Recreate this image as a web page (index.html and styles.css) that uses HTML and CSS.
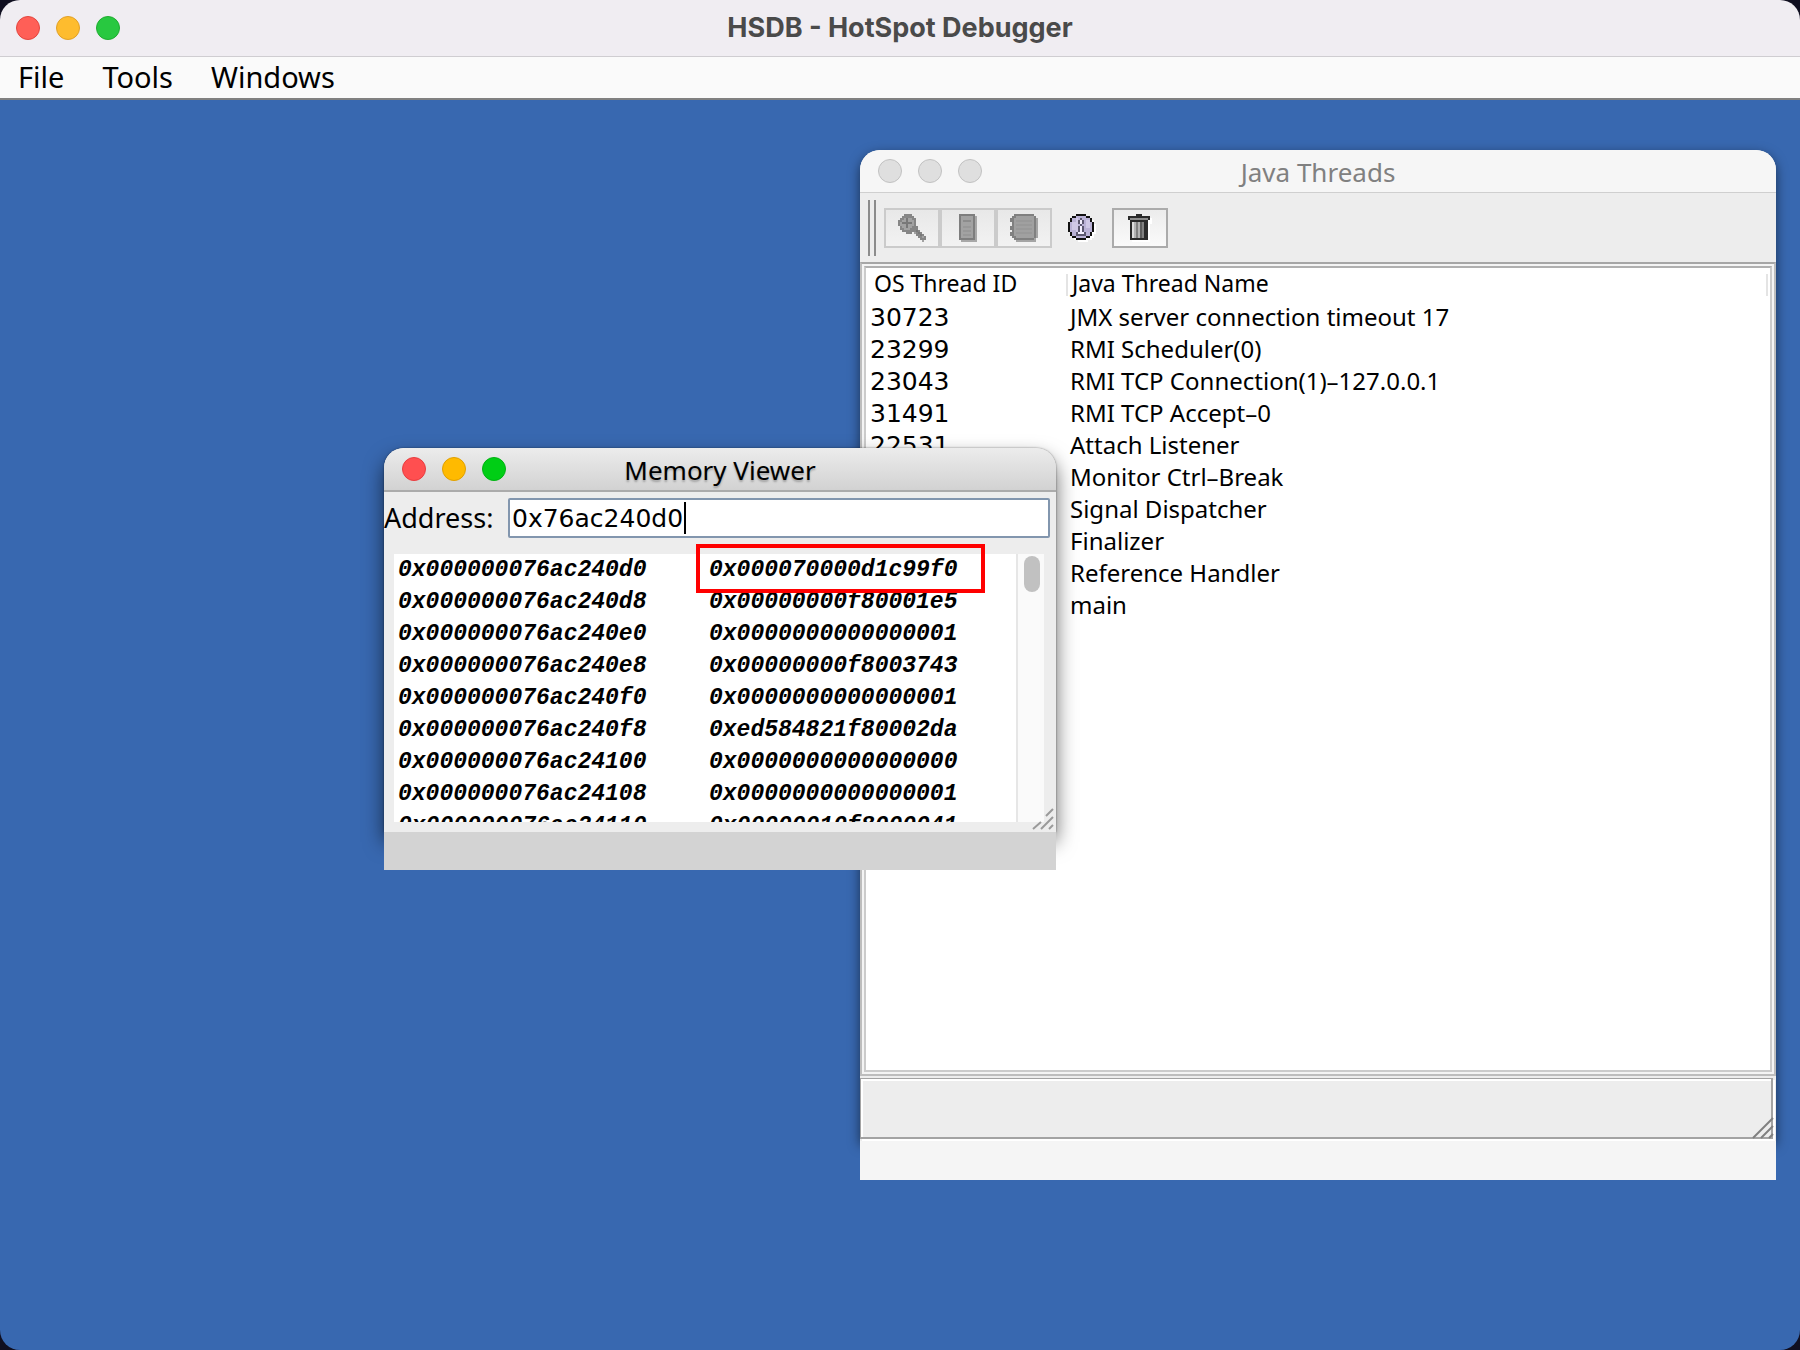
FILE: index.html
```html
<!DOCTYPE html>
<html lang="en">
<head>
<meta charset="utf-8">
<title>HSDB - HotSpot Debugger</title>
<link rel="stylesheet" href="styles.css">
</head>
<body>
<div class="app">
  <header class="app-title">
    <div class="lights"><button class="light close" aria-label="Close"></button><button class="light minimize" aria-label="Minimize"></button><button class="light zoom" aria-label="Zoom"></button></div>
    <h1>HSDB - HotSpot Debugger</h1>
  </header>
  <nav class="menubar">
    <button>File</button><button>Tools</button><button>Windows</button>
  </nav>
  <main class="desktop">
    <section class="window threads" aria-labelledby="threads-title">
      <div class="frame">
        <header class="titlebar">
          <div class="lights"><button class="light" aria-label="Close"></button><button class="light" aria-label="Minimize"></button><button class="light" aria-label="Zoom"></button></div>
          <h2 id="threads-title">Java Threads</h2>
        </header>
        <div class="toolbar">
          <span class="handle"></span>
          <div class="tools">
            <button class="tool" disabled aria-label="Inspect thread">
              <svg width="28" height="28" viewBox="0 0 14 14" shape-rendering="crispEdges"><path fill="#868686" d="M3 0h4v1h1v1h1v4h1v2h1v1h1v1h1v1h1v2h-1v1h-1v-1h-1v-1h-1v-1H9v-1H8V9H7v1H4V9H2V8H1V6H0V3h1V2h1V1h1z"/><path fill="#a2a2a2" d="M3 2h4v1h1v3H7v1H6v1H3V7H2V6H1V4h1V3h1zM8 9h1v1H8zM12 11h1v1h-1zM12 13h1v1h-1z"/><path fill="#787878" d="M4 2h1v2h2v1H5v2H4V5H2V4h2zM9 8h1v1h1v1h1v1h-1v-1h-1V9H9z"/></svg>
            </button>
            <button class="tool" disabled aria-label="Stack memory">
              <svg width="18" height="28" viewBox="0 0 9 14" shape-rendering="crispEdges"><path fill="#a8a8a8" d="M1 1h8v13H1z"/><path fill="#7e7e7e" d="M0 0h8v13H0z"/><path fill="#a2a2a2" d="M1 1h6v11H1z"/><path fill="#8c8c8c" d="M2 3h4v1H2z"/><path fill="#989898" d="M2 6h4v1H2zM2 8h4v1H2zM2 10h4v1H2z"/></svg>
            </button>
            <button class="tool" disabled aria-label="Stack trace">
              <svg width="28" height="28" viewBox="0 0 14 14" shape-rendering="crispEdges"><path fill="#a4a4a4" d="M3 1h10v1h1v10h-1v2H3z"/><path fill="#808080" d="M2 0h10v1h1v11h-1v1H2v-1H1v-1H0V9h1V8H0V6h1V4H0V2h1V1h1z"/><path fill="#a0a0a0" d="M3 1h9v11H3v-1H2V2h1z"/><path fill="#999" d="M3 3h8v1H3zM3 5h8v1H3zM3 7h8v1H3zM3 9h8v1H3z"/></svg>
            </button>
            <button class="tool flat" aria-label="Thread information">
              <svg width="28" height="28" viewBox="0 0 14 14" shape-rendering="crispEdges"><path fill="#fff" d="M5 1h5v1h2v1h1v2h1v5h-1v2h-1v1h-2v1H5v-1H3v-1H2z"/><path fill="#111" d="M4 0h5v1h2v1h1v2h1v5h-1v2h-1v1H9v1H4v-1H2v-1H1V9H0V4h1V2h1V1h2z"/><path fill="#bab2d6" d="M4 1h5v1h2v2h1v5h-1v2H9v1H4v-1H2V9H1V4h1V2h2z"/><path fill="#cfc8e6" d="M4 2h1v8H4zM2 4h2v4H2zM9 3h2v4H9z"/><path fill="#5c5870" d="M6 2h1v1h1v2H7v1h1v3h1v2H4V9h1V6h1V5H5V3h1z"/><path fill="#f4f0ff" d="M6 3h1v2H6zM6 6h1v3h1v1H5V9h1z"/></svg>
            </button>
            <button class="tool" aria-label="Find garbage">
              <svg width="24" height="28" viewBox="0 0 12 14" shape-rendering="crispEdges"><path fill="#fff" d="M1 2h11v3h-1v9H2z"/><path fill="#2a2a2a" d="M4 0h3v1h4v2h-1v10H1V3H0V1h4z"/><path fill="#8c8c8c" d="M1 2h9v1H1z"/><path fill="#ddd" d="M2 4h1v8H2z"/><path fill="#b4b4b4" d="M3 4h1v8H3zM5 4h1v8H5z"/><path fill="#808080" d="M4 4h1v8H4zM7 4h1v8H7z"/><path fill="#5c5c5c" d="M6 4h1v8H6z"/></svg>
            </button>
          </div>
        </div>
        <div class="outer-border"><div class="inner-border">
          <table class="thread-table">
            <thead><tr><th>OS Thread ID</th><th>Java Thread Name</th></tr></thead>
            <tbody>
              <tr><td>30723</td><td>JMX server connection timeout 17</td></tr>
              <tr><td>23299</td><td>RMI Scheduler(0)</td></tr>
              <tr><td>23043</td><td>RMI TCP Connection(1)–127.0.0.1</td></tr>
              <tr><td>31491</td><td>RMI TCP Accept–0</td></tr>
              <tr><td>22531</td><td>Attach Listener</td></tr>
              <tr><td></td><td>Monitor Ctrl–Break</td></tr>
              <tr><td></td><td>Signal Dispatcher</td></tr>
              <tr><td></td><td>Finalizer</td></tr>
              <tr><td></td><td>Reference Handler</td></tr>
              <tr><td></td><td>main</td></tr>
            </tbody>
          </table>
        </div></div>
        <div class="status"></div>
        <svg class="grip" width="22" height="22" viewBox="0 0 22 22"><path d="M1 21L21 1M9 21L21 9M17 21L21 17" stroke="#808080" stroke-width="2"/></svg>
      </div>
      <div class="strip"></div>
    </section>

    <section class="window memory" aria-labelledby="memory-title">
      <div class="frame">
        <header class="titlebar">
          <div class="lights"><button class="light close" aria-label="Close"></button><button class="light minimize" aria-label="Minimize"></button><button class="light zoom" aria-label="Zoom"></button></div>
          <h2 id="memory-title">Memory Viewer</h2>
        </header>
        <div class="address">
          <label for="address">Address:</label>
          <div class="field"><input id="address" type="text" value="0x76ac240d0"><span class="caret"></span></div>
        </div>
        <div class="dump">
          <div class="dump-view">
            <table class="dump-table">
              <tr><td>0x000000076ac240d0</td><td>0x000070000d1c99f0</td></tr>
              <tr><td>0x000000076ac240d8</td><td>0x00000000f80001e5</td></tr>
              <tr><td>0x000000076ac240e0</td><td>0x0000000000000001</td></tr>
              <tr><td>0x000000076ac240e8</td><td>0x00000000f8003743</td></tr>
              <tr><td>0x000000076ac240f0</td><td>0x0000000000000001</td></tr>
              <tr><td>0x000000076ac240f8</td><td>0xed584821f80002da</td></tr>
              <tr><td>0x000000076ac24100</td><td>0x0000000000000000</td></tr>
              <tr><td>0x000000076ac24108</td><td>0x0000000000000001</td></tr>
              <tr><td>0x000000076ac24110</td><td>0x00000010f8000041</td></tr>
            </table>
          </div>
          <div class="track"><div class="thumb"></div></div>
          <div class="mark"></div>
        </div>
        <svg class="grip" width="22" height="22" viewBox="0 0 22 22"><path d="M1 21L9 14M9 21L21 9M17 21L21 17M14 8L21 1" stroke="#9a9a9a" stroke-width="2"/></svg>
      </div>
      <div class="strip"></div>
    </section>
  </main>
</div>
</body>
</html>
```
FILE: styles.css
```css
* { box-sizing: border-box; }

body {
  margin: 0;
  background: #100f20;
  color: #000;
  font-family: "Noto Sans", "Open Sans", sans-serif;
}

button, input { font: inherit; color: inherit; }
button { border: 0; padding: 0; background: none; }
h1, h2 { margin: 0; }

.app {
  display: flex;
  flex-direction: column;
  min-height: 100vh;
  border-radius: 20px;
  overflow: hidden;
}

.app-title {
  display: grid;
  align-items: center;
  height: 57px;
  padding: 0 16px;
  background: #f0edf2;
  border-bottom: 1px solid #cfcdd1;
}
.app-title > *, .titlebar > * { grid-area: 1 / 1; }
.app-title h1 {
  text-align: center;
  font: 700 27px/32px Inter, sans-serif;
  color: #4a4a4a;
}

.lights { display: flex; gap: 16px; }
.light {
  width: 24px;
  height: 24px;
  border-radius: 50%;
  background: #dfdfdf;
  border: 1px solid #c2c2c2;
}
.light.close { background: #ff5f57; border-color: #e2463f; }
.light.minimize { background: #febc2e; border-color: #e0a028; }
.light.zoom { background: #28c840; border-color: #1fac30; }

.menubar {
  display: flex;
  align-items: flex-start;
  gap: 38px;
  height: 43px;
  padding: 0 18px;
  background: #fafafa;
  border-bottom: 2px solid #808080;
  font-size: 29px;
  line-height: 40px;
}

.desktop {
  position: relative;
  flex: 1;
  background: #3868b0;
}

/* Internal windows float on the desktop */
.window { position: absolute; display: flex; flex-direction: column; }
.frame {
  position: relative;
  flex: 1;
  display: flex;
  flex-direction: column;
  min-height: 0;
  border-radius: 20px 20px 0 0;
  background: #ededed;
}
.titlebar {
  display: grid;
  align-items: center;
  padding: 0 18px;
  border-radius: 20px 20px 0 0;
}
.titlebar h2 {
  padding-top: 2px;
  text-align: center;
  font-size: 26px;
  line-height: 36px;
  font-weight: 400;
}
.strip { position: relative; flex: none; }
.grip { position: absolute; right: 2px; bottom: 2px; fill: none; }

.threads { left: 860px; right: 24px; top: 50px; height: 1030px; }
.threads .frame { box-shadow: 0 4px 12px rgba(0, 0, 0, .55); }
.threads .titlebar {
  height: 43px;
  background: #f6f6f6;
  border-bottom: 1px solid #cfcfcf;
  color: #808080;
}
.threads .strip { height: 39px; background: #f5f5f5; }

.toolbar {
  display: flex;
  align-items: center;
  gap: 8px;
  height: 69px;
  padding-left: 8px;
}
.handle {
  width: 8px;
  height: 56px;
  border: solid #8c8c8c;
  border-width: 0 2px;
}
.tools { display: flex; }
.tool {
  display: flex;
  align-items: center;
  justify-content: center;
  width: 56px;
  height: 40px;
  border: 2px solid #ababab;
  background: linear-gradient(#ececec, #fafafa);
}
.tool:disabled { border-color: #cbcbcb; background: linear-gradient(#e8e8e8, #f2f2f2); }
.tool.flat { width: 60px; border-color: transparent; background: none; }

.outer-border {
  flex: 1;
  display: flex;
  padding: 2px;
  border: 2px solid #bdbdbd;
  border-top-color: #a6a6a6;
  background: #f4f4f4;
}
.inner-border {
  flex: 1;
  border: 2px solid #cbcbcb;
  border-top-color: #b0b0b0;
  background: #fff;
}
.thread-table {
  width: 100%;
  border-collapse: collapse;
  table-layout: fixed;
  font-size: 24px;
  line-height: 31px;
  text-align: left;
}
.thread-table td { height: 32px; padding: 0 4px; vertical-align: baseline; }
.thread-table th {
  height: 33px;
  padding: 0 6px;
  vertical-align: top;
  font-size: 23px;
  line-height: 30px;
  font-weight: 400;
}
.thread-table th:first-child { width: 200px; padding-left: 8px; }
.thread-table th + th {
  background:
    linear-gradient(#e4e4e4, #e4e4e4) left top 6px / 2px 22px no-repeat,
    linear-gradient(#e4e4e4, #e4e4e4) right 2px top 6px / 2px 22px no-repeat;
}
.thread-table td:first-child { font-family: "DejaVu Sans", sans-serif; font-size: 25px; }

.status {
  height: 61px;
  margin: 2px 3px 2px 0;
  border: 1px solid #a3a3a3;
  border-width: 1px 2px 2px 1px;
  box-shadow: inset 2px 2px #fff, 2px 2px #fff;
}

.memory { left: 384px; top: 348px; width: 672px; height: 422px; }
.memory .frame { box-shadow: 0 10px 20px rgba(0, 0, 0, .6), 0 0 2px rgba(0, 0, 0, .5); }
.memory .titlebar {
  height: 44px;
  background: linear-gradient(#ececec, #d2d2d2);
  border-bottom: 2px solid #ababab;
}
.memory .close { background: #ff4f50; border-color: #e83c3f; }
.memory .minimize { background: #ffba00; border-color: #e0a000; }
.memory .zoom { background: #00ce15; border-color: #00b312; }
.memory h2 { text-shadow: 0 2px 2px rgba(0, 0, 0, .25); }
.memory .strip { height: 38px; background: #d3d3d3; }

.address {
  display: flex;
  align-items: center;
  justify-content: space-between;
  padding: 6px 6px 16px 0;
  font-size: 27px;
}
.address label { line-height: 40px; }
.field { position: relative; width: 542px; }
.field input {
  display: block;
  width: 100%;
  height: 40px;
  padding: 0 2px;
  border: 2px solid #8296ae;
  border-radius: 2px;
  background: #fff;
  font-family: "DejaVu Sans", sans-serif;
  font-size: 25px;
}
.caret {
  position: absolute;
  left: 176px;
  top: 4px;
  width: 2px;
  height: 32px;
  background: #000;
}

.dump {
  position: relative;
  flex: 1;
  display: flex;
  min-height: 0;
  margin: 0 12px 10px 10px;
  background: #fff;
}
.dump-view { flex: 1; overflow: hidden; }
.dump-table {
  border-collapse: collapse;
  font: italic 700 23px/32px "Liberation Mono", monospace;
}
.dump-table td { height: 32px; padding: 0 0 0 4px; width: 312px; }

/* Highlight round the first value */
.mark {
  position: absolute;
  left: 302px;
  top: -10px;
  width: 289px;
  height: 49px;
  border: 4px solid #f00;
}
.track {
  width: 28px;
  padding: 2px 4px 0 6px;
  border-left: 2px solid #e6e6e6;
  background: #fafafa;
}
.thumb { width: 16px; height: 36px; border-radius: 8px; background: #c1c1c1; }
```
